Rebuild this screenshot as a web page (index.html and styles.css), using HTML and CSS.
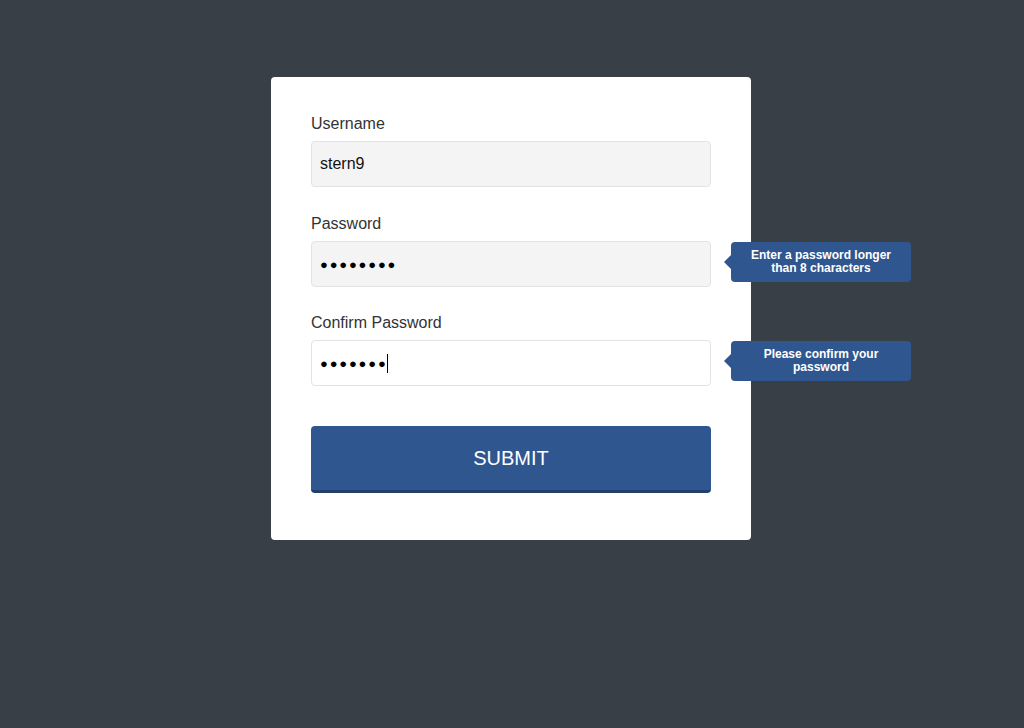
FILE: index.html
```html
<!DOCTYPE html>
<html lang="en">
<head>
<meta charset="utf-8">
<title>Sign up</title>
<link rel="stylesheet" href="styles.css">
</head>
<body>
<main class="page">
  <form class="card">
    <div class="group">
      <label class="label">Username</label>
      <div class="field">stern9</div>
    </div>
    <div class="group">
      <label class="label">Password</label>
      <div class="field-wrap">
        <div class="field dots">●●●●●●●●</div>
        <div class="tip">Enter a password longer than 8 characters</div>
      </div>
    </div>
    <div class="group">
      <label class="label">Confirm Password</label>
      <div class="field-wrap">
        <div class="field dots focused">●●●●●●●<span class="caret"></span></div>
        <div class="tip">Please confirm your password</div>
      </div>
    </div>
    <button type="button" class="submit">SUBMIT</button>
  </form>
</main>
</body>
</html>
```
FILE: styles.css
```css
html, body {
  margin: 0;
  padding: 0;
  background: #393f47;
  font-family: "Liberation Sans", Arial, sans-serif;
}
.page {
  height: 728px;
  padding-top: 77px;
  padding-right: 2px;
  box-sizing: border-box;
  display: flex;
  justify-content: center;
  align-items: flex-start;
}
.card {
  width: 480px;
  box-sizing: border-box;
  background: #fff;
  border-radius: 4px;
  padding: 38px 40px 47px;
  display: flex;
  flex-direction: column;
}
.group {
  display: flex;
  flex-direction: column;
  margin-bottom: 27px;
}
.group:first-child {
  margin-bottom: 28px;
}
.group:nth-child(3) {
  margin-bottom: 40px;
}
.label {
  font-size: 16px;
  line-height: 18px;
  color: #333;
  margin-bottom: 8px;
}
.field-wrap {
  position: relative;
}
.field {
  height: 46px;
  box-sizing: border-box;
  border: 1px solid #e3e3e3;
  border-radius: 4px;
  background: #f4f4f4;
  padding: 0 8px;
  display: flex;
  align-items: center;
  font-size: 16px;
  color: #111;
}
.field.focused {
  background: #fff;
}
.dots {
  font-family: "Liberation Sans", Arial, sans-serif;
  font-size: 13px;
  letter-spacing: 1.8px;
  color: #000;
  padding-left: 8px;
}
.caret {
  display: inline-block;
  width: 1px;
  height: 19px;
  background: #000;
  margin-left: -1px;
}
.tip {
  position: absolute;
  left: 420px;
  top: 1px;
  width: 180px;
  height: 40px;
  box-sizing: border-box;
  padding: 0 16px;
  background: #2f568f;
  border-radius: 4px;
  color: #fff;
  font-size: 12px;
  font-weight: bold;
  line-height: 13px;
  text-align: center;
  display: flex;
  align-items: center;
  justify-content: center;
}
.tip::before {
  content: "";
  position: absolute;
  left: -7px;
  top: 13px;
  border-style: solid;
  border-width: 7px 7px 7px 0;
  border-color: transparent #2f568f transparent transparent;
}
.submit {
  height: 67px;
  border: none;
  border-bottom: 3px solid #22406b;
  border-radius: 4px;
  background: #2f568f;
  color: #fff;
  font-family: "Liberation Sans", Arial, sans-serif;
  font-size: 20px;
  padding: 0;
}
```
